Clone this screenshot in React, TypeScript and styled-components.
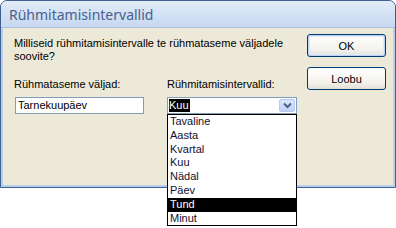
import styled, { createGlobalStyle } from "styled-components";

const Global = createGlobalStyle`
    html, body {
        margin: 0;
        padding: 0;
        background: #ffffff;
    }
    body {
        width: 396px;
        height: 228px;
        overflow: hidden;
        font-family: "Liberation Sans", Arial, sans-serif;
    }
`

const Window = styled.div`
    position: relative;
    width: 396px;
    height: 188px;
    box-sizing: border-box;
    border: 1px solid #3f5f8f;
    border-radius: 7px 7px 0 0;
    background: #b9cfeb;
    display: flex;
    flex-direction: column;
`

const TitleBar = styled.div`
    height: 26px;
    display: flex;
    align-items: center;
    padding-left: 8px;
    border-radius: 6px 6px 0 0;
    background: linear-gradient(#e4edf9, #d3e1f4 50%, #c7d8f0);
    border-bottom: 1px solid #a9c2e4;
    font-family: "Noto Sans", "Open Sans", sans-serif;
    font-size: 14px;
    color: #4a5f8d;
`

const Body = styled.div`
    flex: 1;
    margin: 0 2px 2px;
    background: #ece9d8;
    display: flex;
    padding: 6px 7px 0 11px;
    font-size: 11px;
    color: #000;
`

const Main = styled.div`
    flex: 1;
`

const Prompt = styled.p`
    margin: 3px 0 0;
    line-height: 13px;
    width: 270px;
`

const Fields = styled.div`
    display: flex;
    margin-top: 15px;
`

const Field = styled.div<{ $width: number }>`
    width: ${p => p.$width}px;
    position: relative;
`

const Label = styled.div`
    height: 13px;
    line-height: 13px;
    margin-bottom: 6px;
`

const TextBox = styled.div`
    width: 129px;
    height: 17px;
    box-sizing: border-box;
    margin-left: 1px;
    border: 1px solid #7f9db9;
    background: #fff;
    padding-left: 2px;
    line-height: 15px;
`

const Combo = styled.div`
    width: 130px;
    height: 17px;
    box-sizing: border-box;
    border: 1px solid #7f9db9;
    background: #fff;
    display: flex;
    align-items: center;
    padding-left: 1px;
`

const Selected = styled.span`
    background: #000;
    color: #fff;
    line-height: 13px;
    padding-right: 1px;
`

const DropButton = styled.div`
    margin-left: auto;
    margin-right: 1px;
    width: 16px;
    height: 13px;
    box-sizing: border-box;
    border: 1px solid #b7c9f0;
    border-radius: 2px;
    background: linear-gradient(#dae6fd, #bfd2f8);
    display: flex;
    align-items: center;
    justify-content: center;
`

const List = styled.div`
    position: absolute;
    left: 0;
    top: 36px;
    width: 130px;
    box-sizing: border-box;
    border: 1px solid #000;
    background: #fff;
    z-index: 2;
`

const Item = styled.div<{ $active?: boolean }>`
    height: 13.8px;
    line-height: 13.8px;
    padding-left: 2px;
    background: ${p => (p.$active ? "#000" : "#fff")};
    color: ${p => (p.$active ? "#fff" : "#101030")};
`

const Buttons = styled.div`
    display: flex;
    flex-direction: column;
    gap: 10px;
`

const Button = styled.div<{ $default?: boolean }>`
    width: 79px;
    height: 23px;
    box-sizing: border-box;
    border: 1px solid #003c74;
    border-radius: 3px;
    background: linear-gradient(#ffffff, #f3f2ec 70%, #e2e0d6);
    box-shadow: ${p => (p.$default ? "inset 0 0 0 1px #bcd0f2, inset 0 0 0 2px #dfe8fa" : "none")};
    display: flex;
    align-items: center;
    justify-content: center;
    color: #000;
`

const intervals = ["Tavaline", "Aasta", "Kvartal", "Kuu", "Nädal", "Päev", "Tund", "Minut"]

export default function App() {
    return (
        <>
            <Global />
            <Window>
                <TitleBar>Rühmitamisintervallid</TitleBar>
                <Body>
                    <Main>
                        <Prompt>Milliseid rühmitamisintervalle te rühmataseme väljadele soovite?</Prompt>
                        <Fields>
                            <Field $width={153}>
                                <Label>Rühmataseme väljad:</Label>
                                <TextBox>Tarnekuupäev</TextBox>
                            </Field>
                            <Field $width={130}>
                                <Label>Rühmitamisintervallid:</Label>
                                <Combo>
                                    <Selected>Kuu</Selected>
                                    <DropButton>
                                        <svg width="9" height="7" viewBox="0 0 9 7">
                                            <path d="M1 1.5 L4.5 5 L8 1.5" fill="none" stroke="#4d6185" strokeWidth="2" />
                                        </svg>
                                    </DropButton>
                                </Combo>
                                <List>
                                    {intervals.map(name => (
                                        <Item key={name} $active={name === "Tund"}>{name}</Item>
                                    ))}
                                </List>
                            </Field>
                        </Fields>
                    </Main>
                    <Buttons>
                        <Button $default>OK</Button>
                        <Button>Loobu</Button>
                    </Buttons>
                </Body>
            </Window>
        </>
    )
}
